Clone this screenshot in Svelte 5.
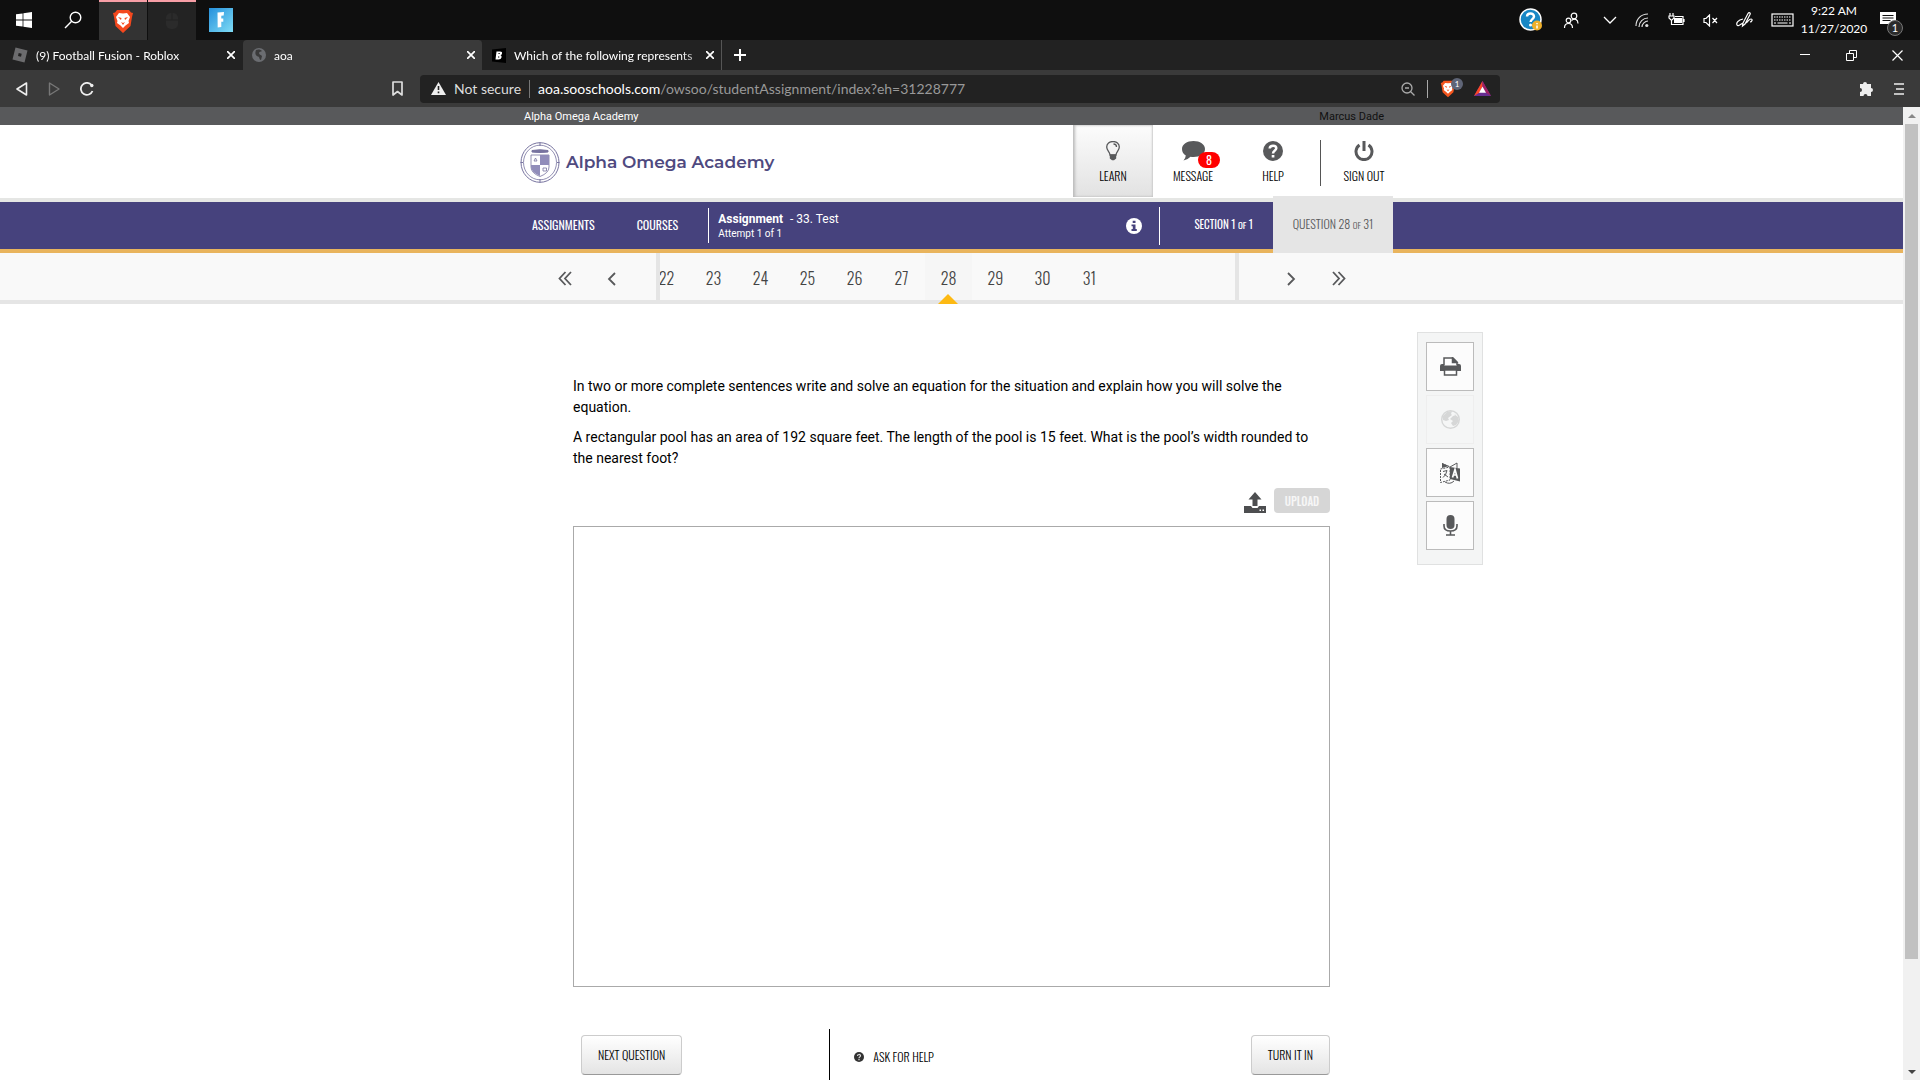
<script>
  // Browser tabs
  const tabs = [
    { title: '(9) Football Fusion - Roblox', icon: 'roblox', active: false },
    { title: 'aoa', icon: 'globe', active: true },
    { title: 'Which of the following represents', icon: 'brainly', active: false }
  ];

  // Questions that are visible in the pager
  const questions = [22, 23, 24, 25, 26, 27, 28, 29, 30, 31];
  let current = $state(28);
  let answer = $state('');
</script>

<div class="desktop">
  <!-- Windows taskbar -->
  <div class="taskbar">
    <button class="task" aria-label="Start">
      <svg width="16" height="16" viewBox="0 0 16 16" fill="#fff"><path d="M0 2.3 6.6 1.4v6.2H0zM7.4 1.3 16 0v7.6H7.4zM0 8.4h6.6v6.2L0 13.7zM7.4 8.4H16V16l-8.6-1.2z" /></svg>
    </button>
    <button class="task" aria-label="Search">
      <svg width="18" height="18" viewBox="0 0 18 18" fill="none" stroke="#fff" stroke-width="1.4"><circle cx="11.5" cy="6.5" r="5.3" /><path d="M7.7 10.3 1 17" /></svg>
    </button>
    <button class="task running front" aria-label="Brave">
      <svg width="22" height="25" viewBox="0 0 22 25">
        <path d="M5 1h12l2 2.5 2 .5-1 4-1.5 9L11 24l-7.5-7L2 8 1 4l2-.5z" fill="#f4481e" />
        <path d="M11 4.5 15 4l3 4-1.5 4 .5 2-3.5 2.5L11 19l-2.5-2.5L5 14l.5-2L4 8l3-4z" fill="#fff" />
        <path d="m6 8 3.5 1L9 11zM16 8l-3.5 1 .5 2zM9 13l2 1 2-1-2 3z" fill="#f4481e" />
      </svg>
    </button>
    <button class="task running" aria-label="Mouse settings">
      <svg width="14" height="18" viewBox="0 0 14 18" fill="#2b2b2b"><rect x="1" y="1" width="12" height="16" rx="5" /><path d="M7 1v7M1 8h12" stroke="#232323" /></svg>
    </button>
    <button class="task" aria-label="Fortnite">
      <svg width="24" height="24" viewBox="0 0 24 24">
        <defs><linearGradient id="sky" x1="0" y1="0" x2="1" y2="1"><stop offset="0" stop-color="#2590dc" /><stop offset="1" stop-color="#7fdcf5" /></linearGradient></defs>
        <rect width="24" height="24" fill="url(#sky)" /><path d="m8.5 4.5 6.5-.5-.3 3.5-2.4.2v2.8h2v3.3h-2V19l-3.6.5z" fill="#fff" />
      </svg>
    </button>

    <div class="tray">
      <svg class="tray-help" width="24" height="24" viewBox="0 0 24 24"><circle cx="11.5" cy="11.5" r="10.5" fill="#1787c5" stroke="#fff" stroke-width="1.5" /><path d="M8 8.5C8.2 4.5 15 4.5 15 8.5c0 2.5-3.4 2.7-3.4 5.5" fill="none" stroke="#fff" stroke-width="2.4" /><circle cx="11.5" cy="17" r="1.5" fill="#fff" /><circle cx="18" cy="17.5" r="5" fill="#eeb02c" /><path d="M18 15v1.3M18 17.5v3" stroke="#fff" stroke-width="1.5" /></svg>
      <svg class="tray-people" width="16" height="17" viewBox="0 0 16 17" fill="none" stroke="#fff" stroke-width="1.2"><circle cx="11" cy="4" r="2.8" /><circle cx="5.5" cy="8.5" r="2.3" /><path d="M1.5 16c0-6 8-6 8 0M8.500 8.500c3-3 6.500-1 6.500 3" /></svg>
      <svg width="14" height="8" viewBox="0 0 14 8" fill="none" stroke="#fff" stroke-width="1.3"><path d="m1 1 6 6 6-6" /></svg>
      <svg width="15" height="15" viewBox="0 0 15 15" fill="none" stroke="#ddd" stroke-width="1.2"><path d="M1 13C1 6 6 1 13 1M4 14c0-5 4-9 9-9M7 14c0-3 3-6 6-6" /><circle cx="11.8" cy="12.5" r="1.6" fill="#ddd" stroke="none" /></svg>
      <svg width="17" height="14" viewBox="0 0 17 14" fill="none" stroke="#fff" stroke-width="1.2"><path d="M2 0v3M5 0v3M1 3h5v2L4 7H3L1 5zM3.5 7v4.5H15v-8H7M16 6v3" /><path d="M6 5h8v5H6z" fill="#fff" stroke="none" /></svg>
      <svg width="15" height="13" viewBox="0 0 15 13" fill="none" stroke="#fff" stroke-width="1.2"><path d="M1 4.5h2L6.5 1v11L3 8.500H1zM9.500 4l4.500 5M14 4 9.500 9" /></svg>
      <svg width="17" height="16" viewBox="0 0 17 16" fill="none" stroke="#fff" stroke-width="1.2"><path d="M7 11 12 1.5c1-1.500 3-.5 2 1L9 12l-2.500 2zM7 7C2 8 0 11 1 13s4-1 6-2M10 11c2-1 3-4 5-4s1 3-1 3" /></svg>
      <svg width="23" height="14" viewBox="0 0 23 14" fill="none" stroke="#fff" stroke-width="1.2"><rect x="1" y="1" width="21" height="12" /><path d="M3 4h17M3 7h17" stroke-dasharray="1.500 1" /><path d="M3 10h2M6.500 10h10M18 10h2" /></svg>
      <div class="clock"><span>9:22 AM</span><span>11/27/2020</span></div>
      <button class="notice" aria-label="Notifications">
        <svg width="16" height="16" viewBox="0 0 16 16"><path d="M0 0h16v12h-4v4l-4-4H0z" fill="#fff" /><path d="M2.5 3.500h11M2.500 6h11M2.500 8.500h8" stroke="#111" /></svg>
        <span class="notice-count">1</span>
      </button>
    </div>
  </div>

  <!-- Tab strip -->
  <div class="tabstrip">
    {#each tabs as tab}
      <div class="tab" class:active={tab.active}>
        {#if tab.icon === 'roblox'}
          <svg width="16" height="16" viewBox="0 0 16 16"><path d="M3.5.5 15.500 3.500l-3 12L.5 12.500z" fill="#6c6c6e" /><path d="m6.700 6 3 .7-.7 3-3-.7z" fill="#222" /></svg>
        {:else if tab.icon === 'globe'}
          <svg width="14" height="14" viewBox="0 0 14 14"><circle cx="7" cy="7" r="7" fill="#6b6d71" /><path d="M4 2c2-1 5-.5 6 1-1 1-3 .5-3 2S9 7 10 8l-1 4c-2 0-1-3-3-3.500S2.500 6 4 2z" fill="#3a3a3a" /></svg>
        {:else}
          <svg width="14" height="15" viewBox="0 0 14 15"><path d="M0 1.500 14 0v15L0 13.500z" fill="#000" /><path d="M4.500 3.500h3.500q2.500 0 2 2-.3 1.500-1.500 1.800 1.500.5 1 2.200-.5 2-3 2H3.500z" fill="#fff" /><path d="M6.500 5.500h1.200M6 9h1.300" stroke="#000" /></svg>
        {/if}
        <span class="tab-title">{tab.title}</span>
        <button class="close" aria-label="Close tab"><svg width="8" height="8" viewBox="0 0 8 8" stroke="#fff" stroke-width="1.7"><path d="m0 0 8 8M8 0 0 8" /></svg></button>
      </div>
    {/each}
    <button class="new-tab" aria-label="New tab"><svg width="12" height="12" viewBox="0 0 12 12" stroke="#fff" stroke-width="2"><path d="M6 0v12M0 6h12" /></svg></button>
    <div class="window-buttons">
      <button aria-label="Minimise"><svg width="10" height="10" viewBox="0 0 10 10" stroke="#fff"><path d="M0 4.500h10" /></svg></button>
      <button aria-label="Restore"><svg width="11" height="11" viewBox="0 0 11 11" fill="none" stroke="#fff"><path d="M.5 3.500h7v7h-7zM3.500 3V.5h7v7H8" /></svg></button>
      <button aria-label="Close"><svg width="11" height="11" viewBox="0 0 11 11" stroke="#fff" stroke-width="1.2"><path d="m.5.5 10 10M10.500.5l-10 10" /></svg></button>
    </div>
  </div>

  <!-- Toolbar -->
  <div class="toolbar">
    <div class="history">
      <button aria-label="Back"><svg width="12" height="14" viewBox="0 0 12 14" fill="none" stroke="#eee" stroke-width="1.6" stroke-linejoin="round"><path d="M10.500 1v12L1 7z" /></svg></button>
      <button aria-label="Forward"><svg width="12" height="14" viewBox="0 0 12 14" fill="none" stroke="#777" stroke-width="1.4" stroke-linejoin="round"><path d="M1.500 1v12L11 7z" /></svg></button>
      <button aria-label="Reload"><svg width="14" height="14" viewBox="0 0 14 14" fill="none" stroke="#eee" stroke-width="1.8"><path d="M12.500 9A6 6 0 1 1 11.500 3" /><circle cx="11.800" cy="3.500" r="1.700" fill="#eee" stroke="none" /></svg></button>
    </div>
    <button class="bookmark" aria-label="Bookmark"><svg width="11" height="15" viewBox="0 0 11 15" fill="none" stroke="#ddd" stroke-width="1.7" stroke-linejoin="round"><path d="M1 1h9v13l-4.500-3.500L1 14z" /></svg></button>
    <div class="address">
      <svg width="15" height="13" viewBox="0 0 15 13"><path d="M7.500 0 15 13H0z" fill="#eee" /><path d="M7.500 4v4M7.500 9.500v1.700" stroke="#222" stroke-width="1.6" /></svg>
      <span class="insecure">Not secure</span>
      <span class="url"><b>aoa.sooschools.com</b>/owsoo/studentAssignment/index?eh=31228777</span>
      <svg width="14" height="14" viewBox="0 0 14 14" fill="none" stroke="#aaa" stroke-width="1.3"><circle cx="6" cy="6" r="5" /><path d="m9.500 9.500 4 4M4 6h4" /></svg>
      <div class="shields">
        <svg width="16" height="18" viewBox="0 0 22 25"><path d="M5 1h12l2 2.500 2 .5-1 4-1.500 9L11 24l-7.500-7L2 8 1 4l2-.5z" fill="#f4561e" /><path d="M11 4.500 15 4l3 4-1.500 4 .5 2-3.500 2.500L11 19l-2.500-2.500L5 14l.5-2L4 8l3-4z" fill="#fff" /><path d="m6 8 3.500 1L9 11zM16 8l-3.500 1 .5 2zM9 13l2 1 2-1-2 3z" fill="#f4561e" /></svg>
        <span class="shield-count">1</span>
      </div>
      <svg width="17" height="15" viewBox="0 0 17 15"><path d="M8.500 0 17 15H0z" fill="#662d91" /><path d="M8.500 0 0 15l5.200-3.200 3.300-6z" fill="#ff4724" /><path d="m8.500 0 8.500 15-5-3.200-3.500-6z" fill="#9e1f63" /><path d="m8.500 5.500 3.500 6.200H5z" fill="#fff" /></svg>
    </div>
    <div class="extras">
      <button aria-label="Extensions"><svg width="15" height="15" viewBox="0 0 15 15" fill="#eee"><path d="M4 3a2 2 0 0 1 4 0h4v4a2 2 0 0 1 0 4v4H8.500a2 2 0 0 0-4 0H1v-4a2 2 0 0 0 0-4V3z" /></svg></button>
      <button aria-label="Menu"><svg width="10" height="12" viewBox="0 0 10 12" stroke="#eee" stroke-width="1.7"><path d="M0 1h10M2 6h8M0 11h10" /></svg></button>
    </div>
  </div>

  <div class="viewport">
    <div class="page">
      <div class="topbar">
        <div class="container">
          <span>Alpha Omega Academy</span>
          <span class="user">Marcus Dade</span>
        </div>
      </div>

      <header>
        <div class="container">
          <a class="logo" href="/">
            <svg width="40" height="41" viewBox="0 0 40 41" fill="none" stroke="#77739f">
              <ellipse cx="20" cy="20.500" rx="19" ry="19.800" /><ellipse cx="20" cy="20.500" rx="16.500" ry="17.300" stroke-width=".8" />
              <path d="M20 .5V4M20 37v3.500M.5 20.500H3M37 20.500h2.500" />
              <path d="M12 8.500q8-1.500 16 0v1.500q-8 1-16 0z" fill="#77739f" />
              <path d="M11 13h18v12q0 6-9 9.500-9-3.500-9-9.500z" fill="#fff" stroke-width=".8" />
              <path d="M20 13h9v10h-9zM11 23h9v11q-9-4-9-9z" fill="#918dba" stroke="none" />
              <path d="M14 19l1.500-3 1.500 3zM23 26h3.500v3h-3.500z" stroke-width=".8" />
            </svg>
            <span>Alpha Omega Academy</span>
          </a>
          <nav class="main-nav">
            <a class="selected" href="#learn">
              <svg width="14" height="20" viewBox="0 0 14 20" fill="none" stroke="#58595b" stroke-width="1.3"><path d="M4 14c0-3-3.300-4.500-3.300-8a6.300 5.500 0 0 1 12.600 0c0 3.500-3.300 5-3.300 8z" /><path d="M7.500 3q3 0 3 3" /><path d="M3.800 13.500h6.400v4L8 19.300H6l-2.200-1.800z" fill="#58595b" stroke="none" /></svg>
              LEARN
            </a>
            <a href="#message">
              <svg width="23" height="20" viewBox="0 0 23 20" fill="#58595b"><path d="M11.500 0C18 0 23 3.500 23 8s-5 8-11.500 8q-1.500 0-3-.2Q5.500 19 1.500 19.500q2-2 2.300-5Q0 12 0 8c0-4.500 5-8 11.500-8z" /></svg>
              <span class="badge">8</span>
              MESSAGE
            </a>
            <a href="#help">
              <svg width="20" height="20" viewBox="0 0 20 20"><circle cx="10" cy="10" r="10" fill="#58595b" /><path d="M6.700 7.500C7 3.700 13.300 4 13.300 7.300 13.300 9.500 10 9.500 10 12.500" fill="none" stroke="#fff" stroke-width="2.500" /><path d="M8.700 14h2.700v2.500H8.700z" fill="#fff" /></svg>
              HELP
            </a>
            <a class="signout" href="#signout">
              <svg width="20" height="20" viewBox="0 0 20 20" fill="none" stroke="#58595b" stroke-width="3"><path d="M5.500 4a8 8 0 1 0 9 0M10 0v10" /></svg>
              SIGN OUT
            </a>
          </nav>
        </div>
      </header>

      <div class="course-bar">
        <div class="container">
          <a href="#assignments">ASSIGNMENTS</a>
          <a href="#courses">COURSES</a>
          <div class="assignment">
            <div><b>Assignment</b> - 33. Test</div>
            <div class="attempt">Attempt 1 of 1</div>
          </div>
          <button class="info" aria-label="Assignment information">
            <svg width="16" height="16" viewBox="0 0 16 16"><circle cx="8" cy="8" r="8" fill="#fff" /><path d="M6.700 2.700h2.800v2.300H6.700zM5.500 6.500h4V11h1.300v2H5.500v-2h1.300V8.300H5.500z" fill="#46427d" /></svg>
          </button>
          <div class="section">SECTION 1 <small>OF</small> 1</div>
          <div class="question">QUESTION 28 <small>OF</small> 31</div>
        </div>
      </div>

      <div class="pager">
        <div class="container">
          <div class="steps before">
            <button aria-label="First question"><svg width="14" height="15" viewBox="0 0 14 15" fill="none" stroke="#58595b" stroke-width="1.8"><path d="M7.500 1 1.500 7.500l6 6.500M13 1 7 7.500l6 6.500" /></svg></button>
            <button aria-label="Previous question"><svg width="9" height="14" viewBox="0 0 9 14" fill="none" stroke="#58595b" stroke-width="1.8"><path d="M8 1 2 7l6 6" /></svg></button>
          </div>
          <div class="numbers">
            {#each questions as q}
              <button class="number" class:current={q === current} onclick={() => (current = q)}>{q}</button>
            {/each}
          </div>
          <div class="steps">
            <button aria-label="Next question"><svg width="9" height="14" viewBox="0 0 9 14" fill="none" stroke="#58595b" stroke-width="1.8"><path d="m1 1 6 6-6 6" /></svg></button>
            <button aria-label="Last question"><svg width="14" height="15" viewBox="0 0 14 15" fill="none" stroke="#58595b" stroke-width="1.8"><path d="m6.500 1 6 6.500-6 6.500M1 1l6 6.500L1 14" /></svg></button>
          </div>
        </div>
      </div>

      <main>
        <section class="content">
          <div class="prompt" id="prompt">
            <p>In two or more complete sentences write and solve an equation for the situation and explain how you will solve the equation.</p>
            <p>A rectangular pool has an area of 192 square feet. The length of the pool is 15 feet. What is the pool’s width rounded to the nearest foot?</p>
          </div>
          <div class="upload">
            <svg width="22" height="21" viewBox="0 0 22 21" fill="#4d4e50"><path d="M11 0 17.500 7.500H13.500V14h-5V7.500H4.500z" /><path d="M0 14h7l1.500 2h5l1.500-2h7v7H0z" /><path d="M15.500 17.500h1.500v1.500h-1.500zM18.500 17.500H20v1.500h-1.500z" fill="#fff" /></svg>
            <button disabled>UPLOAD</button>
          </div>
          <textarea aria-labelledby="prompt" bind:value={answer}></textarea>
          <footer>
            <button class="push">NEXT QUESTION</button>
            <div class="ask">
              <a href="#ask">
                <svg width="10" height="10" viewBox="0 0 10 10"><circle cx="5" cy="5" r="5" fill="#333" /><path d="M3.500 4C3.500 2 6.500 2 6.500 3.800 6.500 5 5 4.800 5 6.300M5 7v1.300" fill="none" stroke="#ddd" stroke-width="1.2" /></svg>
                ASK FOR HELP
              </a>
            </div>
            <button class="push">TURN IT IN</button>
          </footer>
        </section>

        <aside>
          <button aria-label="Print"><svg width="21" height="19" viewBox="0 0 21 19" fill="#fff" stroke="#58595b" stroke-width="1.500"><path d="M0 9q0-2 2-2h17q2 0 2 2v5H0z" fill="#58595b" stroke="none" /><path d="M4 8.500V1h9l4 4v3.500" /><path d="M12.500 1v4.500H17z" fill="#58595b" /><path d="M4.500 13h12v5h-12z" /></svg></button>
          <button disabled aria-label="Web"><svg width="19" height="19" viewBox="0 0 19 19"><circle cx="9.500" cy="9.500" r="8.800" fill="#f5f6f6" stroke="#d6d7d7" stroke-width="1.4" /><path d="m2 6 4-4 5-1-1 3 1 1-4 3 1 2-3 1-3-1zM13 4l4 3 1 4-3 4-3 1-2-3 2-2-3-2 3-3 3-1z" fill="#d6d7d7" /></svg></button>
          <button aria-label="Translate"><svg width="20" height="22" viewBox="0 0 20 22" fill="none" stroke="#58595b"><path d="M2 1.500 10 5v13l-9.500 2.500V7L10 5" stroke-dasharray="2 1" /><path d="m2 1 7 3-7 2z" fill="#58595b" stroke="none" /><path d="m10 5 10 1.500v13L10 17z" fill="#58595b" stroke="none" /><path d="M10 5 17 1v5M3 9.500l4-1q-1 5-4 7M4 12l4 3M5 20q5 3 9-1" /><path d="m12.500 15.500 2.500-8 2.500 9M13.500 13h3.500" stroke="#fff" stroke-width="1.7" /></svg></button>
          <button aria-label="Record"><svg width="15" height="21" viewBox="0 0 15 21" fill="none" stroke="#58595b" stroke-width="1.6"><rect x="3.500" y="0" width="8" height="14" rx="4" fill="#58595b" stroke="none" /><path d="M1 9v2q0 5 6.500 5t6.500-5V9M7.500 16v4M3 20h9" /></svg></button>
        </aside>
      </main>
    </div>

    <div class="scrollbar">
      <span class="arrow up"></span>
      <div class="thumb"></div>
      <span class="arrow down"></span>
    </div>
  </div>
</div>

<style>
  :global(body) {
    margin: 0;
    background: #fff;
  }

  * {
    box-sizing: border-box;
  }

  button {
    font: inherit;
    color: inherit;
    padding: 0;
    border: 0;
    background: none;
    cursor: pointer;
  }

  a {
    color: inherit;
    text-decoration: none;
  }

  svg {
    display: block;
    flex: none;
  }

  .desktop {
    display: flex;
    flex-direction: column;
    min-height: 100vh;
    font-family: 'Lato', 'Open Sans', sans-serif;
    font-size: 12px;
    color: #fff;
  }

  /* Taskbar */
  .taskbar {
    display: flex;
    height: 40px;
    background: #0f0f0f;
  }

  .task {
    display: flex;
    align-items: center;
    justify-content: center;
    width: 48px;
    margin-right: 1px;
  }

  .task.running {
    background: #232323;
    border-top: 2px solid #f79ea6;
  }

  .task.front {
    margin-left: 1px;
    background: #333;
  }

  .tray {
    display: flex;
    align-items: center;
    gap: 18px;
    margin-left: auto;
    padding-right: 24px;
  }

  .tray-help {
    margin-right: 2px;
  }

  .tray-people {
    margin-right: 6px;
  }

  .clock {
    display: flex;
    flex-direction: column;
    align-items: center;
    width: 60px;
    margin: 0 -2px 0 -8px;
    line-height: 18px;
  }

  .notice {
    position: relative;
  }

  .notice-count {
    position: absolute;
    top: 8px;
    left: 7px;
    width: 16px;
    height: 16px;
    border: 1px solid #777;
    border-radius: 50%;
    background: #2b2b2b;
    font-size: 11px;
    line-height: 14px;
  }

  /* Tabs */
  .tabstrip {
    display: flex;
    height: 30px;
    background: #222;
  }

  .tab {
    display: flex;
    align-items: center;
    gap: 8px;
    width: 240px;
    padding: 0 7px 0 12px;
    border-right: 1px solid #222;
  }

  .tab:first-child {
    width: 243px;
  }

  .tab:nth-child(3) {
    width: 239px;
    padding-left: 9px;
    border-right-color: #555;
  }

  .tab.active {
    padding-left: 9px;
    background: #3a3a3a;
    border-radius: 4px 4px 0 0;
  }

  .tab-title {
    flex: 1;
    white-space: nowrap;
    mask-image: linear-gradient(to right, #000 90%, #0008);
  }

  .close {
    padding: 4px 0;
  }

  .new-tab {
    padding: 0 12px;
  }

  .window-buttons {
    display: flex;
    margin-left: auto;
  }

  .window-buttons button {
    display: flex;
    align-items: center;
    justify-content: center;
    width: 46px;
  }

  /* Toolbar */
  .toolbar {
    display: flex;
    align-items: center;
    height: 37px;
    padding: 0 16px;
    background: #3a3a3a;
    font-size: 14px;
  }

  .history {
    display: flex;
    gap: 20px;
    flex: 0 1 372px;
  }

  .bookmark {
    width: 32px;
    padding-left: 4px;
  }

  .address {
    display: flex;
    align-items: center;
    gap: 8px;
    flex: 0 1 1080px;
    height: 28px;
    padding: 0 9px 0 11px;
    border-radius: 4px;
    background: #222;
  }

  .insecure {
    padding-right: 8px;
    border-right: 1px solid #777;
    color: #ddd;
    line-height: 18px;
  }

  .url {
    flex: 1;
    color: #999;
  }

  .url b {
    color: #fff;
    font-weight: 400;
  }

  .shields {
    position: relative;
    margin-left: 4px;
    padding: 0 10px 0 12px;
    border-left: 1px solid #aaa;
  }

  .shield-count {
    position: absolute;
    top: -2px;
    right: 3px;
    width: 12px;
    height: 12px;
    border-radius: 6px;
    background: #5f6577;
    font-size: 8px;
    line-height: 12px;
    text-align: center;
  }

  .extras {
    display: flex;
    align-items: center;
    gap: 20px;
    margin-left: auto;
  }

  /* Page */
  .viewport {
    display: flex;
    flex: 1;
  }

  .page {
    display: flex;
    flex: 1;
    flex-direction: column;
    background: #fff;
    color: #000;
    font-family: 'Roboto', sans-serif;
  }

  .container {
    display: flex;
    width: 100%;
    max-width: 883px;
    margin: 0 auto;
  }

  .topbar {
    padding-top: 2px;
    background: #58595b;
    color: #fff;
    font-size: 11px;
    line-height: 16px;
  }

  .topbar .container {
    justify-content: space-between;
    padding: 0 9px 0 14px;
  }

  .user {
    color: #111;
  }

  header {
    height: 77px;
    border-bottom: 4px solid #e5e6e4;
  }

  header .container {
    justify-content: space-between;
  }

  .logo {
    display: flex;
    align-items: center;
    gap: 6px;
    padding: 2px 0 0 10px;
    color: #4f4a80;
    font-family: 'Montserrat', 'Lato', sans-serif;
    font-size: 17px;
    font-weight: 600;
  }

  .main-nav {
    display: flex;
    font-family: 'Oswald', 'Roboto Condensed', sans-serif;
    font-weight: 300;
  }

  .main-nav a {
    position: relative;
    display: flex;
    flex-direction: column;
    align-items: center;
    justify-content: space-between;
    width: 80px;
    height: 72px;
    padding: 16px 0 12px;
    line-height: 18px;
  }

  .main-nav .selected {
    background: linear-gradient(#fcfcfc, #e2e2e2);
    box-shadow: inset 2px 0 3px #bbb, inset -1px 0 2px #ccc;
  }

  .main-nav .signout {
    padding-left: 22px;
  }

  .signout::before {
    content: '';
    position: absolute;
    top: 15px;
    left: 7px;
    height: 46px;
    border-left: 1px solid #555;
  }

  .badge {
    position: absolute;
    top: 27px;
    left: 45px;
    width: 22px;
    height: 16px;
    border-radius: 8px;
    background: #f00;
    color: #fff;
    font-weight: 400;
    line-height: 16px;
    text-align: center;
  }

  .course-bar {
    height: 51px;
    border-bottom: 4px solid #e9b45d;
    background: #46427d;
    color: #fff;
    font-family: 'Oswald', 'Roboto Condensed', sans-serif;
    line-height: 18px;
  }

  .course-bar .container {
    align-items: center;
    height: 47px;
    padding-left: 22px;
  }

  .course-bar a {
    margin: 0 42px 2px 0;
  }

  .course-bar a + a {
    margin-right: 30px;
  }

  .assignment {
    padding: 3px 0 3px 9px;
    border-left: 1px solid #fff;
    font-family: 'Roboto', sans-serif;
    line-height: 16px;
  }

  .assignment b {
    margin-right: 4px;
  }

  .attempt {
    font-size: 10px;
    line-height: 13px;
  }

  .info {
    margin-left: auto;
    padding: 11px 17px 11px 0;
    border-right: 1px solid #fff;
  }

  .section {
    padding: 0 20px 2px 34px;
    font-size: 11px;
  }

  .course-bar small {
    font-size: 9px;
  }

  .question {
    align-self: flex-end;
    width: 120px;
    margin-bottom: -4px;
    padding: 19px 0;
    background: #e5e5e5;
    color: #58595b;
    font-weight: 300;
    text-align: center;
  }

  .pager {
    border-bottom: 4px solid #e5e5e5;
    background: #f9f9f9;
    color: #444;
    font-family: 'Oswald', 'Roboto Condensed', sans-serif;
    font-size: 16px;
    font-weight: 300;
  }

  .steps {
    display: flex;
    flex: 1;
    align-items: center;
    padding: 4px 0 0 29px;
  }

  .steps button {
    display: flex;
    justify-content: center;
    width: 47px;
  }

  .steps.before {
    flex: 0 0 146px;
    padding-left: 31px;
  }

  .numbers {
    display: flex;
    flex: 0 0 583px;
    height: 51px;
    margin-bottom: -4px;
    padding-bottom: 4px;
    border: solid #e5e5e5;
    border-width: 0 4px;
    overflow: hidden;
  }

  .number {
    position: relative;
    flex: 0 0 47px;
    padding-top: 2px;
  }

  /* The strip has scrolled part of the way past its first number */
  .number:first-child {
    margin-left: -17px;
  }

  .number.current {
    background: #f6f6f6;
  }

  .current::after {
    content: '';
    position: absolute;
    bottom: -4px;
    left: 13px;
    border: solid transparent;
    border-width: 0 10px 10px;
    border-bottom-color: #fdb913;
  }

  /* Question */
  main {
    display: grid;
    flex: 1;
    grid-template-columns: 1fr minmax(0, 757px) 1fr;
  }

  .content {
    display: flex;
    grid-column: 2;
    flex-direction: column;
    padding-top: 72px;
  }

  .prompt {
    font-size: 14px;
    line-height: 21px;
  }

  p {
    margin: 0 0 9px;
  }

  .upload {
    display: flex;
    align-items: flex-end;
    justify-content: flex-end;
    gap: 8px;
    margin: 10px 0 13px;
  }

  .upload button {
    width: 56px;
    height: 25px;
    border-radius: 4px;
    background: #d6d6d6;
    color: #f6f6f6;
    font-family: 'Oswald', 'Roboto Condensed', sans-serif;
    font-size: 11px;
    font-weight: 500;
  }

  textarea {
    display: block;
    height: 461px;
    padding: 8px;
    border: 1px solid #aaa;
    outline: 0;
    resize: none;
    font: inherit;
  }

  footer {
    display: flex;
    flex: 1;
    align-items: flex-start;
    margin-top: 42px;
    padding-left: 8px;
    font-family: 'Oswald', 'Roboto Condensed', sans-serif;
    font-weight: 300;
  }

  .push {
    height: 40px;
    margin-top: 6px;
    padding: 0 16px 2px;
    border: 1px solid #ccc;
    border-bottom-color: #999;
    border-radius: 4px;
    background: linear-gradient(#fff, #e4e4e4);
  }

  .ask {
    align-self: stretch;
    margin: 0 auto 0 147px;
    padding: 19px 24px 0;
    border-left: 1px solid #000;
  }

  .ask a {
    display: flex;
    align-items: center;
    gap: 9px;
    line-height: 18px;
  }

  aside {
    display: flex;
    flex-direction: column;
    gap: 4px;
    align-self: start;
    justify-self: start;
    margin: 28px 0 0 87px;
    padding: 9px 8px 14px;
    border: 1px solid #e0e1e1;
    background: #f4f5f5;
  }

  aside button {
    display: flex;
    align-items: center;
    justify-content: center;
    width: 48px;
    height: 49px;
    border: 1px solid #bbb;
    background: #fcfcfc;
  }

  aside button:disabled {
    border-color: #eee;
    background: #f5f6f6;
  }

  /* Scrollbar */
  .scrollbar {
    display: flex;
    flex-direction: column;
    align-items: center;
    width: 17px;
    background: #f1f1f1;
  }

  .thumb {
    flex: 0 1 835px;
    width: 13px;
    background: #c1c1c1;
  }

  .arrow {
    margin: 7px 0 6px;
    border: solid transparent;
    border-width: 0 4px 4px;
    border-bottom-color: #888;
  }

  .arrow.down {
    margin: auto 0 6px;
    border-width: 4px 4px 0;
    border-top-color: #444;
  }
</style>
